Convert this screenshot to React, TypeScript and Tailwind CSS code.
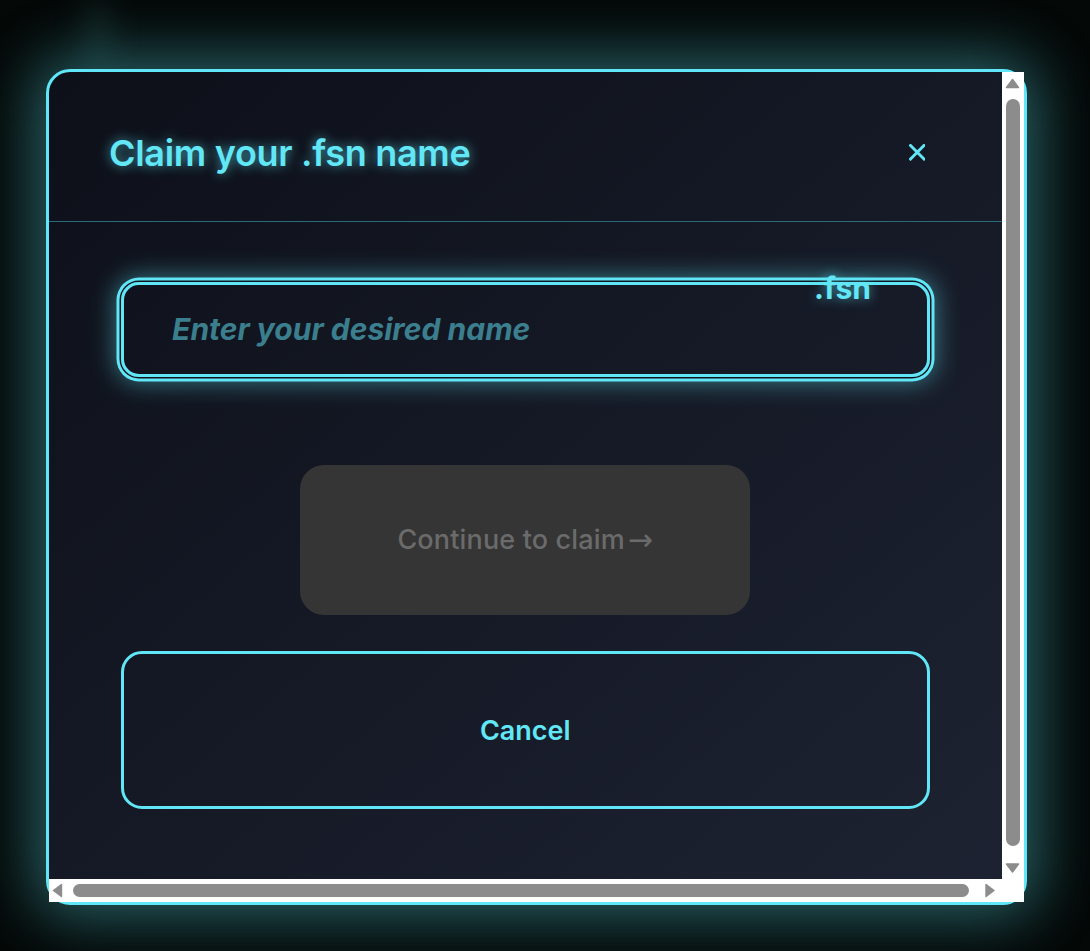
import React from "react";

function Tri({ dir }: { dir: "up" | "down" | "left" | "right" }) {
  const pts: Record<string, string> = {
    up: "1,6.3 5,1 9,6.3",
    down: "1,0.7 5,6 9,0.7",
    left: "6.3,1 1,5 6.3,9",
    right: "0.7,1 6,5 0.7,9",
  };
  const vertical = dir === "up" || dir === "down";
  return (
    <svg
      width={vertical ? 10 : 7}
      height={vertical ? 7 : 10}
      viewBox={vertical ? "0 0 10 7" : "0 0 7 10"}
      className="shrink-0"
    >
      <polygon points={pts[dir]} fill="#8c8c8c" stroke="#8c8c8c" strokeWidth="1" strokeLinejoin="round" />
    </svg>
  );
}

export default function App() {
  return (
    <div className="[zoom:1.5] w-[727px] h-[634px] overflow-hidden bg-[#040807] font-['Inter','Noto_Sans',sans-serif] pl-[30.67px] pt-[46px] relative">
      <div className="absolute left-[58px] top-0 w-[14px] h-[40px] bg-[#1a3434] blur-[10px] opacity-60" />
      <div className="relative w-[654px] h-[557px] rounded-2xl border-2 border-[#60e6f6] bg-linear-to-br from-[#0d1019] to-[#1e2333] shadow-[0_0_40px_8px_rgba(96,230,246,0.4)] grid grid-cols-[635px_15px] grid-rows-[538px_15px]">
        <div className="overflow-hidden rounded-tl-[14px]">
          <div className="w-[646px] h-[100px] pt-2 pl-10 pr-[62px] flex items-center justify-between border-b-[0.67px] border-[#2a6b79]">
            <h2 className="text-2xl font-semibold text-[#62e7f7] [text-shadow:0_0_8px_rgba(96,230,246,0.7)] tracking-[-0.2px]">
              Claim your .fsn name
            </h2>
            <button className="w-[11px] h-[11px] flex items-center justify-center">
              <svg width="11" height="11" viewBox="0 0 11 11" fill="none">
                <path d="M1 1L10 10M10 1L1 10" stroke="#62e7f7" strokeWidth="2" strokeLinecap="square" />
              </svg>
            </button>
          </div>
          <div className="w-[635px] px-12 pt-10 pb-[58px] flex flex-col">
            <div className="relative h-[63px]">
              <input
                className="w-full h-full rounded-xl border-2 border-[#60e6f6] bg-transparent pl-8 pr-24 text-xl font-bold italic text-[#62e7f7] outline-none ring-2 ring-[#60e6f6] ring-offset-1 ring-offset-[#10141e] shadow-[0_0_16px_4px_rgba(96,230,246,0.45)] placeholder:text-[#3b7f8e] placeholder:italic placeholder:font-bold"
                placeholder="Enter your desired name"
              />
              <span className="absolute right-[39px] top-[-10px] text-xl font-bold text-[#62e7f7] [text-shadow:0_0_8px_rgba(96,230,246,0.7)]">
                .fsn
              </span>
            </div>
            <button className="mt-[59px] mx-auto w-[300px] h-[100px] rounded-2xl bg-[#353535] text-[#6b6b6b] text-lg font-medium flex items-center justify-center tracking-[0.1px]">
              <span>Continue to claim</span>
              <span className="ml-[2px] mt-[1px] font-['DejaVu_Sans',sans-serif] font-normal text-[20px]">→</span>
            </button>
            <button className="mt-6 w-full h-[105px] rounded-[14px] border-2 border-[#60e6f6] text-lg font-semibold text-[#62e7f7] pt-[2px]">
              Cancel
            </button>
          </div>
        </div>
        <div className="bg-white flex flex-col items-center pt-1 pb-1">
          <Tri dir="up" />
          <div className="mt-[7px] w-[9px] flex-1 rounded-full bg-[#8c8c8c]" />
          <div className="mt-[11px]">
            <Tri dir="down" />
          </div>
        </div>
        <div className="bg-white flex items-center pl-[2px] pr-[4px]">
          <Tri dir="left" />
          <div className="ml-[7px] h-[9px] flex-1 rounded-full bg-[#8c8c8c]" />
          <div className="ml-[11px]">
            <Tri dir="right" />
          </div>
        </div>
        <div className="bg-white" />
      </div>
    </div>
  );
}
